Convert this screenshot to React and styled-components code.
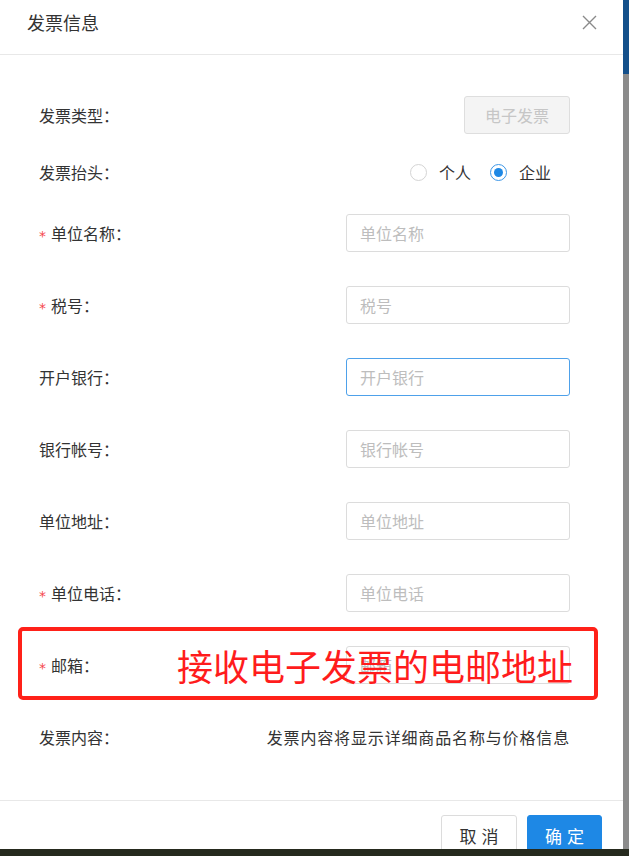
import React from 'react';
import styled, { createGlobalStyle } from 'styled-components';

const GlobalStyle = createGlobalStyle`
    html, body { margin:0; padding:0; background:#8c8c8c; }
    body {
        font-family:"Noto Sans CJK SC", "Noto Sans", sans-serif;
        color:#333;
    }
    * { box-sizing:border-box; }
`;

const Screen = styled.div`
    width:629px;
    height:856px;
    display:flex;
    flex-direction:column;
    overflow:hidden;
`;

const Stage = styled.div`
    flex:1;
    min-height:0;
    display:flex;
    overflow:hidden;
`;

const Backdrop = styled.div`
    flex:1;
    display:flex;
    flex-direction:column;
    background:#8b8b8b;
`;

const BackdropTop = styled.div`
    height:74px;
    background:#14508b;
`;

const Taskbar = styled.div`
    height:7px;
    flex-shrink:0;
    background:#262a1e;
`;

const Modal = styled.div`
    width:623px;
    flex-shrink:0;
    background:#fff;
    display:flex;
    flex-direction:column;
`;

const Header = styled.div`
    height:55px;
    flex-shrink:0;
    display:flex;
    justify-content:space-between;
    align-items:flex-start;
    padding:11px 26px 0 27px;
    border-bottom:1px solid #e8e8e8;
`;

const Title = styled.div`
    font-size:18px;
    line-height:22px;
    color:#333;
`;

const Close = styled.button`
    border:0;
    background:none;
    padding:0;
    margin-top:4px;
    width:15px;
    height:15px;
    cursor:pointer;
`;

const Body = styled.div`
    flex-shrink:0;
    padding:28px 53px 27px 39px;
    display:flex;
    flex-direction:column;
`;

const Row = styled.div`
    position:relative;
    height:${p => p.$h || 72}px;
    display:flex;
    align-items:center;
    justify-content:space-between;
`;

const Label = styled.div`
    font-size:16px;
    line-height:20px;
    color:#333;
    display:flex;
    align-items:center;
`;

const Star = styled.span`
    color:#f5484d;
    font-family:"DejaVu Sans", sans-serif;
    font-size:14px;
    line-height:14px;
    margin-right:5px;
    margin-top:5px;
`;

const Input = styled.input`
    width:224px;
    height:38px;
    border:1px solid ${p => p.$focus ? '#4ea1ea' : '#dcdcdc'};
    border-radius:3px;
    padding:0 13px;
    font-family:inherit;
    font-size:16px;
    color:#333;
    outline:none;
    &::placeholder { color:#bdbdbd; }
`;

const TypeButton = styled.button`
    width:106px;
    height:38px;
    border:1px solid #dedede;
    border-radius:3px;
    background:#f4f4f4;
    color:#c6c6c6;
    font-family:inherit;
    font-size:16px;
`;

const Radios = styled.div`
    display:flex;
    align-items:center;
    gap:19px;
    margin-right:19px;
`;

const RadioItem = styled.label`
    display:flex;
    align-items:center;
    gap:12px;
    font-size:16px;
    line-height:20px;
    color:#333;
`;

const Circle = styled.span`
    width:17px;
    height:17px;
    border-radius:50%;
    border:1px solid ${p => p.$on ? '#3d97e7' : '#d4d4d4'};
    display:flex;
    align-items:center;
    justify-content:center;
    &::after {
        content:"";
        width:9px;
        height:9px;
        border-radius:50%;
        background:${p => p.$on ? '#1e88e5' : 'transparent'};
    }
`;

const Value = styled.div`
    font-size:16px;
    letter-spacing:0.85px;
    line-height:20px;
    color:#333;
`;

const Callout = styled.div`
    position:absolute;
    left:-21px;
    right:-28px;
    top:-2px;
    height:73px;
    border:4px solid #ff2119;
    border-radius:5px;
    pointer-events:none;
`;

const CalloutText = styled.div`
    position:absolute;
    left:138px;
    top:16px;
    font-size:36px;
    line-height:40px;
    color:#ff1c1c;
    white-space:nowrap;
    pointer-events:none;
`;

const Footer = styled.div`
    flex-shrink:0;
    border-top:1px solid #e8e8e8;
    padding:14px 21px 0;
    display:flex;
    justify-content:flex-end;
    gap:10px;
`;

const Button = styled.button`
    width:${p => p.$w}px;
    height:40px;
    border-radius:3px;
    border:1px solid ${p => p.$primary ? '#1e88e5' : '#dcdcdc'};
    background:${p => p.$primary ? '#1e88e5' : '#fff'};
    color:${p => p.$primary ? '#fff' : '#333'};
    font-family:inherit;
    font-size:17px;
    letter-spacing:5px;
    padding:0 0 0 5px;
`;

const fields = [
    { label: '单位名称', required: true },
    { label: '税号', required: true },
    { label: '开户银行', focus: true },
    { label: '银行帐号' },
    { label: '单位地址' },
    { label: '单位电话', required: true },
];

function FieldLabel({ text, required }) {
    return (
        <Label>
            {required && <Star>*</Star>}
            {text}：
        </Label>
    );
}

export default function App() {
    return (
        <Screen>
            <GlobalStyle />
            <Stage>
                <Modal>
                    <Header>
                        <Title>发票信息</Title>
                        <Close aria-label="关闭">
                            <svg width="15" height="15" viewBox="0 0 15 15">
                                <path d="M1 1 L14 14 M14 1 L1 14" stroke="#8a8a8a" strokeWidth="1.4" fill="none" />
                            </svg>
                        </Close>
                    </Header>
                    <Body>
                        <Row $h={64}>
                            <FieldLabel text="发票类型" />
                            <TypeButton disabled>电子发票</TypeButton>
                        </Row>
                        <Row $h={50}>
                            <FieldLabel text="发票抬头" />
                            <Radios>
                                <RadioItem><Circle />个人</RadioItem>
                                <RadioItem><Circle $on />企业</RadioItem>
                            </Radios>
                        </Row>
                        {fields.map(f => (
                            <Row key={f.label}>
                                <FieldLabel text={f.label} required={f.required} />
                                <Input placeholder={f.label} $focus={f.focus} readOnly />
                            </Row>
                        ))}
                        <Row>
                            <FieldLabel text="邮箱" required />
                            <Input placeholder="邮箱" readOnly />
                            <Callout />
                            <CalloutText>接收电子发票的电邮地址</CalloutText>
                        </Row>
                        <Row>
                            <FieldLabel text="发票内容" />
                            <Value>发票内容将显示详细商品名称与价格信息</Value>
                        </Row>
                    </Body>
                    <Footer>
                        <Button $w={76}>取消</Button>
                        <Button $w={75} $primary>确定</Button>
                    </Footer>
                </Modal>
                <Backdrop>
                    <BackdropTop />
                </Backdrop>
            </Stage>
            <Taskbar />
        </Screen>
    );
}
